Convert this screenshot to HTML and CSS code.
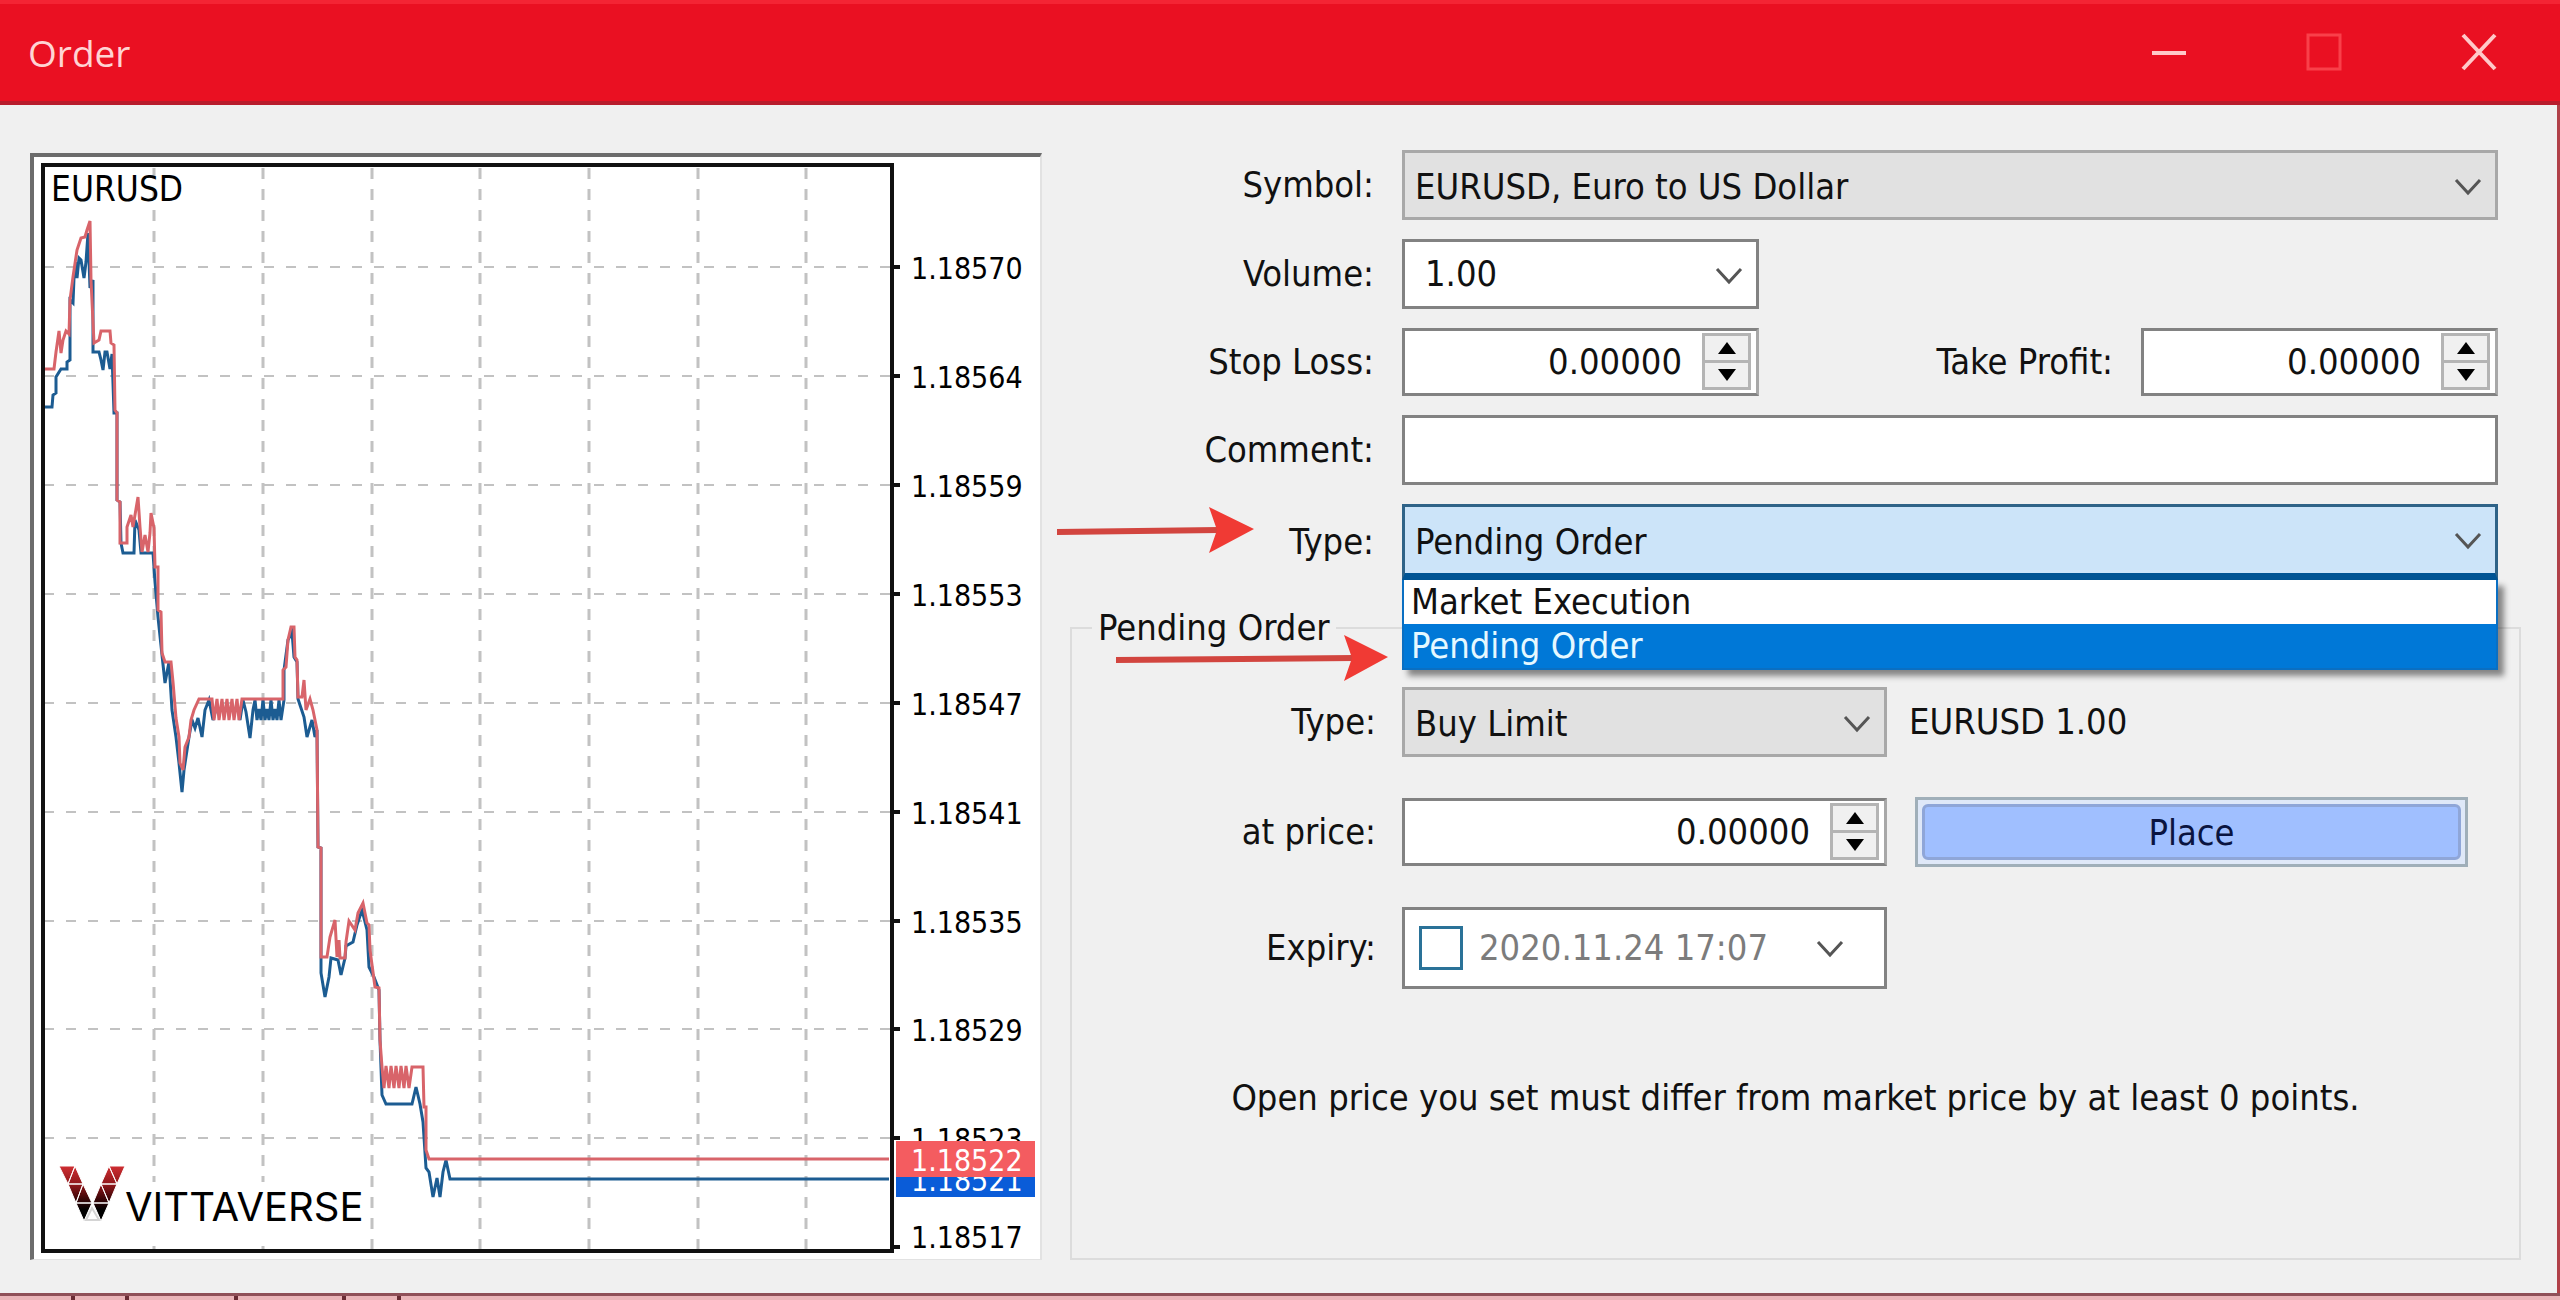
FILE: index.html
```html
<!DOCTYPE html>
<html lang="en">
<head>
<meta charset="utf-8">
<title>Order</title>
<link rel="stylesheet" href="styles.css">
</head>
<body>
<div class="window">
  <header class="titlebar">
    <h1 class="title">Order</h1>
    <div class="controls">
      <button type="button" class="control" aria-label="Minimize"><svg width="36" height="40" viewBox="0 0 36 40"><path d="M1 20H35" stroke="#ffc9c9" stroke-width="4"/></svg></button>
      <button type="button" class="control" aria-label="Maximize" disabled><svg width="36" height="40" viewBox="0 0 36 40"><rect x="2" y="2" width="32" height="34" fill="none" stroke="#f9404a" stroke-width="3"/></svg></button>
      <button type="button" class="control" aria-label="Close"><svg width="36" height="40" viewBox="0 0 36 40"><path d="M2 2L34 36M34 2L2 36" stroke="#ffc9c9" stroke-width="4"/></svg></button>
    </div>
  </header>

  <main class="content">
    <section class="chart" aria-label="EURUSD tick chart">
      <svg class="plot" viewBox="34 157 1006 1102">
        <defs>
          <linearGradient id="brand" gradientUnits="userSpaceOnUse" x1="0" y1="1166" x2="0" y2="1210">
            <stop offset="0" stop-color="#cf2e32"/><stop offset="0.45" stop-color="#8a1518"/><stop offset="0.75" stop-color="#3a0507"/><stop offset="1" stop-color="#000"/>
          </linearGradient>
        </defs>
        <g class="grid">
          <path d="M154 168V1249M263 168V1249M372 168V1249M480 168V1249M589 168V1249M698 168V1249M806 168V1249"/>
          <path class="level" d="M44 267H890M44 376H890M44 485H890M44 594H890M44 703H890M44 812H890M44 921H890M44 1029H890M44 1138H890"/>
        </g>
        <rect x="45" y="1182" width="322" height="64" fill="#fff"/>
        <polyline class="bid" points="43,407 52,407 53,395 56,393 56,377 61,369 67,369 67,362 70,360 70,300 73,303 74,278 76,262 77,278 79,258 81,260 84,278 86,262 88,233 90,288 93,280 93,352 99,352 101,360 103,370 105,352 107,352 110,369 112,354 114,413 117,413 117,500 120,502 121,543 123,553 134,553 135,520 139,530 141,553 153,553 155,582 158,617 162,655 165,683 169,662 172,710 176,737 179,763 182,792 184,770 189,737 192,720 195,728 198,718 202,737 205,710 209,700 213,720 216,709 239,709 240,720 243,700 246,712 250,738 253,710 255,700 257,720 259,709 261,720 263,700 265,720 267,709 269,720 271,700 273,720 275,709 277,720 279,700 281,720 284,700 284,670 288,640 292,632 294,657 297,662 298,699 304,717 307,737 312,720 315,737 317,730 318,847 321,848 321,973 325,997 329,977 331,958 338,960 341,975 345,958 346,946 353,942 357,925 362,910 367,930 369,967 374,977 379,990 380,1040 382,1095 386,1104 412,1104 416,1087 420,1104 423,1122 426,1168 429,1172 433,1197 437,1178 440,1197 443,1172 446,1160 450,1179 889,1179"/>
        <polyline class="ask" points="43,369 54,369 56,352 59,331 61,353 63,340 66,331 69,334 70,300 73,277 77,250 81,238 85,237 87,230 90,221 91,280 94,343 99,340 101,331 110,331 111,343 114,345 115,410 117,413 117,500 120,502 120,543 127,543 127,527 131,515 133,527 138,497 140,527 142,552 145,535 148,552 150,533 151,513 154,528 155,567 158,567 158,610 161,612 162,653 165,662 171,662 173,682 176,718 179,737 180,763 183,770 185,747 189,737 191,720 194,710 199,699 208,699 212,699 214,720 217,699 219,720 222,699 224,720 227,699 229,720 232,699 234,720 237,699 239,720 242,699 283,699 283,670 286,667 288,640 291,627 294,627 295,657 297,660 298,697 302,697 304,680 306,710 310,699 313,710 317,730 318,847 321,848 321,957 327,957 330,937 335,920 337,957 339,940 340,958 345,958 346,942 349,921 355,930 358,913 363,903 367,923 369,925 370,950 375,987 379,988 380,1040 382,1067 384,1088 386,1066 389,1088 391,1066 394,1088 396,1066 399,1088 401,1066 404,1088 406,1066 409,1088 412,1067 423,1067 424,1107 426,1107 426,1150 429,1159 889,1159"/>
        <rect x="43" y="165" width="849" height="1086" fill="none" stroke="#111" stroke-width="4"/>
        <path d="M894 267h6M894 376h6M894 485h6M894 594h6M894 703h6M894 812h6M894 921h6M894 1029h6M894 1138h6M894 1247h6" stroke="#111" stroke-width="4"/>
        <text class="pair" x="51" y="201">EURUSD</text>
        <g class="scale">
          <text x="911" y="279">1.18570</text>
          <text x="911" y="388">1.18564</text>
          <text x="911" y="497">1.18559</text>
          <text x="911" y="606">1.18553</text>
          <text x="911" y="715">1.18547</text>
          <text x="911" y="824">1.18541</text>
          <text x="911" y="933">1.18535</text>
          <text x="911" y="1041">1.18529</text>
          <text x="911" y="1150">1.18523</text>
          <text x="911" y="1248">1.18517</text>
        </g>
        <g class="scale quote">
          <rect x="896" y="1161" width="139" height="36" fill="#0a5cd8"/>
          <text x="911" y="1191">1.18521</text>
          <rect x="896" y="1141" width="139" height="36" fill="#f45c60"/>
          <text x="911" y="1171">1.18522</text>
        </g>
        <g fill="url(#brand)" stroke="#fff" stroke-width="1">
          <path d="M59 1166H75L68 1184ZM75 1166L68 1184H83ZM68 1184H83L76 1203ZM83 1184L76 1203H92ZM76 1203H92L84 1221Z"/>
          <path d="M125 1166H109L117 1184ZM109 1166L117 1184H101ZM117 1184H101L109 1203ZM101 1184L109 1203H93ZM109 1203H93L101 1221Z"/>
        </g>
        <path d="M92 1208L86 1220H99Z" fill="#fff" stroke="#d4d4d4" stroke-width="2"/>
        <text class="brand" x="125" y="1221">VITTAVERSE</text>
      </svg>
    </section>

    <form class="order">
      <div class="row">
        <label class="label" for="symbol">Symbol:</label>
        <div class="combo">
          <select id="symbol" class="select"><option>EURUSD, Euro to US Dollar</option></select>
          <svg class="chevron" viewBox="0 0 28 18"><path d="M2 2L14 15L26 2"/></svg>
        </div>
      </div>
      <div class="row">
        <label class="label" for="volume">Volume:</label>
        <div class="combo narrow">
          <select id="volume" class="select editable"><option>1.00</option></select>
          <svg class="chevron" viewBox="0 0 28 18"><path d="M2 2L14 15L26 2"/></svg>
        </div>
      </div>
      <div class="row">
        <label class="label" for="stop">Stop Loss:</label>
        <div class="pairing">
          <div class="spin narrow">
            <input id="stop" class="number" type="text" value="0.00000">
            <div class="steps">
              <button type="button" class="step" aria-label="Increase"><svg width="18" height="12" viewBox="0 0 18 12"><path d="M9 0L18 12H0Z"/></svg></button>
              <button type="button" class="step" aria-label="Decrease"><svg width="18" height="12" viewBox="0 0 18 12"><path d="M9 12L18 0H0Z"/></svg></button>
            </div>
          </div>
          <label class="second" for="profit">Take Profit:</label>
          <div class="spin narrow">
            <input id="profit" class="number" type="text" value="0.00000">
            <div class="steps">
              <button type="button" class="step" aria-label="Increase"><svg width="18" height="12" viewBox="0 0 18 12"><path d="M9 0L18 12H0Z"/></svg></button>
              <button type="button" class="step" aria-label="Decrease"><svg width="18" height="12" viewBox="0 0 18 12"><path d="M9 12L18 0H0Z"/></svg></button>
            </div>
          </div>
        </div>
      </div>
      <div class="row">
        <label class="label" for="comment">Comment:</label>
        <input id="comment" class="textbox" type="text">
      </div>
      <div class="row">
        <label class="label" for="type">Type:</label>
        <div class="combo">
          <select id="type" class="select open"><option>Market Execution</option><option selected>Pending Order</option></select>
          <svg class="chevron" viewBox="0 0 28 18"><path d="M2 2L14 15L26 2"/></svg>
          <ul class="list" role="listbox">
            <li class="item" role="option">Market Execution</li>
            <li class="item active" role="option" aria-selected="true">Pending Order</li>
          </ul>
        </div>
        <svg class="arrow first" width="198" height="46" viewBox="0 0 198 46"><path d="M0 25L162 23" stroke="#d2453f" stroke-width="6"/><path d="M197 22L152 0L160 23L152 46Z" fill="#f03a34"/></svg>
        <svg class="arrow other" width="273" height="46" viewBox="0 0 273 46"><path d="M0 25L238 23" stroke="#d2453f" stroke-width="6"/><path d="M272 22L228 0L236 23L228 46Z" fill="#f03a34"/></svg>
      </div>

      <fieldset class="pending">
        <legend class="legend">Pending Order</legend>
        <div class="row">
          <label class="label" for="kind">Type:</label>
          <div class="pairing">
            <div class="combo medium">
              <select id="kind" class="select"><option>Buy Limit</option></select>
              <svg class="chevron" viewBox="0 0 28 18"><path d="M2 2L14 15L26 2"/></svg>
            </div>
            <span class="summary">EURUSD 1.00</span>
          </div>
        </div>
        <div class="row">
          <label class="label" for="price">at price:</label>
          <div class="pairing">
            <div class="spin medium">
              <input id="price" class="number" type="text" value="0.00000">
              <div class="steps">
                <button type="button" class="step" aria-label="Increase"><svg width="18" height="12" viewBox="0 0 18 12"><path d="M9 0L18 12H0Z"/></svg></button>
                <button type="button" class="step" aria-label="Decrease"><svg width="18" height="12" viewBox="0 0 18 12"><path d="M9 12L18 0H0Z"/></svg></button>
              </div>
            </div>
            <button type="button" class="place"><span class="face">Place</span></button>
          </div>
        </div>
        <div class="row">
          <label class="label" for="expiry">Expiry:</label>
          <div class="date medium">
            <input class="check" type="checkbox" aria-label="Use expiry">
            <input id="expiry" class="stamp" type="text" value="2020.11.24 17:07">
            <svg class="chevron" viewBox="0 0 28 18"><path d="M2 2L14 15L26 2"/></svg>
          </div>
        </div>
        <p class="note">Open price you set must differ from market price by at least 0 points.</p>
      </fieldset>
    </form>
  </main>
  <div class="edge"></div>
</div>
</body>
</html>
```
FILE: styles.css
```css
* { box-sizing: border-box; }

body {
  margin: 0;
  background: #f0f0f0;
  color: #111;
  font: 36px/42px "DejaVu Sans Condensed", "DejaVu Sans", Tahoma, sans-serif;
  font-stretch: condensed;
}

button, input, select {
  margin: 0;
  border-radius: 0;
  color: inherit;
  font: inherit;
}

button { padding: 0; border: 0; }

/* Title bar */
.titlebar {
  display: flex;
  align-items: center;
  justify-content: space-between;
  height: 105px;
  padding: 0 4px 0 28px;
  border-top: 4px solid #f42434;
  border-bottom: 4px solid #b81c2c;
  background: #ea1022;
}
.title {
  margin: 0;
  color: #ffd4d4;
  font: 400 37px/50px "Open Sans", "Noto Sans", sans-serif;
}
.controls { display: flex; }
.control {
  display: grid;
  place-items: center;
  width: 155px;
  height: 96px;
  background: none;
}

/* Body of the dialog */
.content {
  display: grid;
  grid-template-columns: 1012fr 1451fr;
  gap: 28px;
  padding: 45px 36px 33px 30px;
  border-right: 3px solid #b04048;
}
.edge {
  height: 7px;
  border-top: 3px solid #8f5058;
  background:
    linear-gradient(#6a2c34, #6a2c34) 71px 0 / 4px 4px no-repeat,
    linear-gradient(#6a2c34, #6a2c34) 125px 0 / 4px 4px no-repeat,
    linear-gradient(#6a2c34, #6a2c34) 234px 0 / 4px 4px no-repeat,
    linear-gradient(#6a2c34, #6a2c34) 342px 0 / 4px 4px no-repeat,
    linear-gradient(#6a2c34, #6a2c34) 397px 0 / 4px 4px no-repeat,
    #eab4b8;
}

/* Chart */
.chart {
  align-self: start;
  margin-top: 3px;
  border: solid #6c6c6c;
  border-width: 4px 2px 1px 4px;
  border-right-color: #e2e2e2;
  border-bottom-color: #e2e2e2;
  background: #fff;
}
.plot { display: block; width: 100%; height: auto; }
.grid path { fill: none; stroke: #c2c2c2; stroke-width: 3; stroke-dasharray: 11 10; }
.grid .level { stroke-width: 2; stroke-dasharray: 10 12; }
.bid, .ask { fill: none; stroke-width: 3; }
.bid { stroke: #1c5c92; }
.ask { stroke: #d8646a; }
.pair { font-size: 35px; }
.scale { font-size: 30px; }
.quote text { fill: #fff; }
.brand { font: 400 40px Inter, sans-serif; }

/* Form */
.order {
  display: flex;
  flex-direction: column;
  gap: 19px;
  min-width: 0;
}
.row {
  position: relative;
  display: grid;
  grid-template-columns: 304px 1fr;
  column-gap: 28px;
  align-items: center;
  padding-right: 23px;
}
.label { text-align: right; }
.pairing { display: flex; align-items: center; }
.second { margin: 0 28px 0 auto; }
.narrow { width: 357px; }
.medium { width: 485px; }

.combo { position: relative; }
.select {
  display: block;
  width: 100%;
  height: 70px;
  padding: 4px 60px 0 10px;
  border: 3px solid #a8a8a8;
  background: #e1e1e1;
  appearance: none;
}
.select.editable { padding: 0 60px 0 20px; border-color: #828282; background: #fff; }
.select.open {
  height: 76px;
  border-color: #2f6388;
  border-bottom: 7px solid #005494;
  background: #cce4f9;
}
.chevron {
  position: absolute;
  top: 28px;
  right: 16px;
  width: 28px;
  height: 18px;
  fill: none;
  stroke: #555;
  stroke-width: 3;
  pointer-events: none;
}

.list {
  position: absolute;
  z-index: 1;
  top: 76px;
  left: 0;
  right: 0;
  margin: 0;
  padding: 0;
  border: solid #0a6fc2;
  border-width: 0 2px 2px;
  background: #fff;
  box-shadow: 6px 6px 6px rgba(0, 0, 0, 0.45);
  list-style: none;
}
.item { height: 44px; padding: 1px 7px; }
.item.active { background: #0078d7; color: #e6f8ff; }

.spin {
  display: flex;
  height: 68px;
  padding: 2px 5px 3px 0;
  border: 3px solid #828282;
  border-right-color: #a8a8a8;
  background: #fff;
}
.number {
  flex: 1;
  min-width: 0;
  padding: 0 20px 0 8px;
  border: 0;
  background: none;
  text-align: right;
}
.steps {
  display: grid;
  gap: 3px;
  width: 49px;
  border: 3px solid #b4b4b4;
  background: #b4b4b4;
}
.step { display: grid; place-items: center; background: #f0f0f0; }

.textbox {
  width: 100%;
  height: 70px;
  padding: 0 10px;
  border: 3px solid #828282;
  background: #fff;
}

/* Pending order group */
.pending {
  flex: 1;
  display: flex;
  flex-direction: column;
  gap: 40px;
  min-width: 0;
  margin: 8px 0 0;
  padding: 38px 0 0;
  border: 2px solid #dcdcdc;
}
.pending .row { column-gap: 26px; }
.legend { margin-left: 20px; padding: 0 6px; }
.summary { margin-left: 22px; }
.place {
  flex: 1;
  height: 70px;
  margin: 0 28px;
  padding: 4px;
  border: 3px solid #a0afb9;
  background: #dfe8f8;
}
.face {
  display: block;
  height: 56px;
  border: 3px solid #8fa6d8;
  border-radius: 6px;
  background: #a0bfff;
  color: #0a1440;
  line-height: 52px;
}
.date {
  position: relative;
  display: flex;
  align-items: center;
  gap: 16px;
  height: 82px;
  padding: 0 14px;
  border: 3px solid #828282;
  background: #fff;
}
.date .chevron { top: 30px; right: 40px; }
.check {
  flex: none;
  width: 44px;
  height: 44px;
  border: 3px solid #2a7298;
  background: #fff;
  appearance: none;
}
.stamp {
  width: 290px;
  padding: 0;
  border: 0;
  background: none;
  color: #7c7c7c;
}
.note { margin: 48px 0 0; text-align: center; }

/* Pointers */
.arrow { position: absolute; z-index: 2; }
.first { top: 3px; left: -13px; }
.other { top: 131px; left: 46px; }
```
